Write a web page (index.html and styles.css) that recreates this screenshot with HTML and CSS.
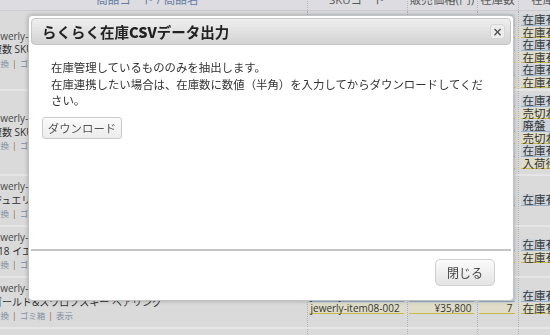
FILE: index.html
```html
<!DOCTYPE html>
<html lang="ja">

<head>
    <meta charset="utf-8">
    <title>商品一覧</title>
    <link rel="stylesheet" href="styles.css">
</head>

<body>
    <!--商品一覧テーブル (ダイアログの後ろ)-->
    <div class="page">
        <table class="items">
            <colgroup>
                <col class="c-name">
                <col class="c-sku">
                <col class="c-price">
                <col class="c-stock">
                <col class="c-status">
            </colgroup>
            <thead>
                <tr>
                    <th><a href="#">商品コード / 商品名</a></th>
                    <th>SKUコード</th>
                    <th>販売価格(円)</th>
                    <th>在庫数</th>
                    <th>在庫状態</th>
                </tr>
            </thead>
            <tbody>
                <tr class="row-a">
                    <td class="name">
                        <div class="code">jewerly-item01</div>
                        <div class="title">複数 SKU : 6</div>
                        <div class="acts"><a href="#">変換</a><i>|</i><a href="#">ゴミ箱</a><i>|</i><a href="#">表示</a></div>
                    </td>
                    <td>
                        <div class="ln">jewerly-item01-001</div>
                        <div class="ln">jewerly-item01-002</div>
                        <div class="ln">jewerly-item01-003</div>
                        <div class="ln">jewerly-item01-004</div>
                        <div class="ln">jewerly-item01-005</div>
                        <div class="ln">jewerly-item01-006</div>
                    </td>
                    <td class="num">
                        <div class="ln">¥12,800</div>
                        <div class="ln">¥12,800</div>
                        <div class="ln">¥13,800</div>
                        <div class="ln">¥13,800</div>
                        <div class="ln">¥14,800</div>
                        <div class="ln">¥14,800</div>
                    </td>
                    <td class="num">
                        <div class="ln">5</div>
                        <div class="ln">5</div>
                        <div class="ln">7</div>
                        <div class="ln">3</div>
                        <div class="ln">9</div>
                        <div class="ln">9</div>
                    </td>
                    <td>
                        <div class="ln">在庫有</div>
                        <div class="ln">在庫有</div>
                        <div class="ln">在庫有</div>
                        <div class="ln">在庫有</div>
                        <div class="ln">在庫有</div>
                        <div class="ln">在庫有</div>
                    </td>
                </tr>
                <tr class="row-b">
                    <td class="name">
                        <div class="code">jewerly-item02</div>
                        <div class="title">複数 SKU : 6</div>
                        <div class="acts"><a href="#">変換</a><i>|</i><a href="#">ゴミ箱</a><i>|</i><a href="#">表示</a></div>
                    </td>
                    <td>
                        <div class="ln">jewerly-item02-001</div>
                        <div class="ln">jewerly-item02-002</div>
                        <div class="ln">jewerly-item02-003</div>
                        <div class="ln">jewerly-item02-004</div>
                        <div class="ln">jewerly-item02-005</div>
                        <div class="ln">jewerly-item02-006</div>
                    </td>
                    <td class="num">
                        <div class="ln">¥9,800</div>
                        <div class="ln">¥9,800</div>
                        <div class="ln">¥9,800</div>
                        <div class="ln">¥10,800</div>
                        <div class="ln">¥10,800</div>
                        <div class="ln">¥10,800</div>
                    </td>
                    <td class="num">
                        <div class="ln">3</div>
                        <div class="ln">0</div>
                        <div class="ln">0</div>
                        <div class="ln">0</div>
                        <div class="ln">2</div>
                        <div class="ln">0</div>
                    </td>
                    <td>
                        <div class="ln">在庫有</div>
                        <div class="ln">売切れ</div>
                        <div class="ln">廃盤</div>
                        <div class="ln">売切れ</div>
                        <div class="ln">在庫有</div>
                        <div class="ln">入荷待</div>
                    </td>
                </tr>
                <tr>
                    <td class="name">
                        <div class="code">jewerly-item03</div>
                        <div class="title">ジュエリーボックス</div>
                        <div class="acts"><a href="#">変換</a><i>|</i><a href="#">ゴミ箱</a><i>|</i><a href="#">表示</a></div>
                    </td>
                    <td><div class="ln">jewerly-item03-001</div></td>
                    <td class="num"><div class="ln">¥4,800</div></td>
                    <td class="num"><div class="ln">5</div></td>
                    <td><div class="ln">在庫有</div></td>
                </tr>
                <tr>
                    <td class="name">
                        <div class="code">jewerly-item07</div>
                        <div class="title">K18 イエローゴールドリング</div>
                        <div class="acts"><a href="#">変換</a><i>|</i><a href="#">ゴミ箱</a><i>|</i><a href="#">表示</a></div>
                    </td>
                    <td>
                        <div class="ln">jewerly-item07-001</div>
                        <div class="ln">jewerly-item07-002</div>
                    </td>
                    <td class="num">
                        <div class="ln">¥28,000</div>
                        <div class="ln">¥28,000</div>
                    </td>
                    <td class="num">
                        <div class="ln">3</div>
                        <div class="ln">3</div>
                    </td>
                    <td>
                        <div class="ln">在庫有</div>
                        <div class="ln">在庫有</div>
                    </td>
                </tr>
                <tr>
                    <td class="name">
                        <div class="code">jewerly-item08</div>
                        <div class="title">ゴールド&amp;スワロフスキー ペアリング</div>
                        <div class="acts"><a href="#">変換</a><i>|</i><a href="#">ゴミ箱</a><i>|</i><a href="#">表示</a></div>
                    </td>
                    <td>
                        <div class="ln">jewerly-item08-001</div>
                        <div class="ln">jewerly-item08-002</div>
                    </td>
                    <td class="num">
                        <div class="ln">¥35,800</div>
                        <div class="ln">¥35,800</div>
                    </td>
                    <td class="num">
                        <div class="ln">7</div>
                        <div class="ln">7</div>
                    </td>
                    <td>
                        <div class="ln">在庫有</div>
                        <div class="ln">在庫有</div>
                    </td>
                </tr>
                <tr>
                    <td class="name">
                        <div class="code">jewerly-item09</div>
                        <div class="title">ゴールドチェーン</div>
                        <div class="acts"><a href="#">変換</a><i>|</i><a href="#">ゴミ箱</a><i>|</i><a href="#">表示</a></div>
                    </td>
                    <td><div class="ln">jewerly-item09-001</div></td>
                    <td class="num"><div class="ln">¥18,000</div></td>
                    <td class="num"><div class="ln">4</div></td>
                    <td><div class="ln">在庫有</div></td>
                </tr>
            </tbody>
        </table>
    </div>

    <!--モーダルの背景-->
    <div class="overlay"></div>

    <!--らくらく在庫CSVデータ出力 ダイアログ-->
    <section class="dialog">
        <div class="dialog-title">
            <span>らくらく在庫<b>CSV</b>データ出力</span>
            <button class="dialog-close">&#215;</button>
        </div>
        <div class="dialog-content">
            <p>在庫管理しているもののみを抽出します。<br>在庫連携したい場合は、在庫数に数値（半角）を入力してからダウンロードしてください。</p>
            <button class="btn-download">ダウンロード</button>
        </div>
        <div class="dialog-buttons">
            <button class="btn-close">閉じる</button>
        </div>
    </section>
</body>

</html>
```

FILE: styles.css
```css
body {
    margin: 0;
    overflow: hidden;
    background-color: #f3f3f3;
    font-family: "Open Sans", "Noto Sans CJK JP", sans-serif;
    color: #3a3a3a;
}

/*テーブルは少しスクロールした状態*/

.page {
    margin: -12px 0 0 -12px;
}

.items {
    width: 602px;
    border-collapse: collapse;
    table-layout: fixed;
    font-size: 10px;
}

.c-name {
    width: 319px;
}

.c-sku {
    width: 100px;
}

.c-price {
    width: 70px;
}

.c-stock {
    width: 41px;
}

.c-status {
    width: 72px;
}

.items th {
    height: 22px;
    padding: 0;
    background-color: #f6f7fb;
    border-bottom: 1px solid #e4e4e8;
    border-left: 1px dotted #d0d0d4;
    font-weight: normal;
    font-size: 11.5px;
    color: #666;
}

.items th:first-child {
    border-left: none;
}

.items th a {
    color: #6d8bb5;
    text-decoration: none;
}

.items td {
    padding: 3px 0 3px 1px;
    vertical-align: middle;
    border-bottom: 2px solid #ffffff;
    border-left: 1px dotted #c4c4c4;
}

.items td.name {
    padding: 4px;
    border-left: none;
}

.row-a td {
    padding-top: 3px;
    padding-bottom: 0;
}

.row-b td {
    padding-top: 4px;
    padding-bottom: 4px;
}

.code {
    line-height: 13.5px;
    color: #505050;
}

.title {
    line-height: 13.5px;
    color: #333;
}

.acts {
    line-height: 14px;
    font-size: 8.5px;
}

.acts a {
    color: #8fa2b8;
    text-decoration: none;
}

.acts i {
    font-style: normal;
    color: #b0703e;
    margin: 0 3px;
}

/*SKUごとの行*/

.ln {
    height: 11.5px;
    margin: 0 3px 1px 0;
    padding: 0 2px;
    line-height: 11px;
    white-space: nowrap;
    background-color: #e4ecf5;
    border-bottom: 1px solid #a9c3dd;
    box-sizing: border-box;
}

.ln:nth-child(even) {
    background-color: #f9f7de;
    border-bottom-color: #e0cf52;
}

.num .ln {
    text-align: right;
}

.items td:last-child .ln {
    margin-left: 1px;
    font-size: 11.5px;
}

.overlay {
    position: fixed;
    top: 0;
    left: 0;
    right: 0;
    bottom: 0;
    background-color: rgba(0, 0, 0, .1);
}

/*ダイアログ*/

.dialog {
    position: absolute;
    left: 28px;
    top: 15px;
    width: 486px;
    height: 286px;
    box-sizing: border-box;
    padding: 2px;
    display: flex;
    flex-direction: column;
    background-color: #fff;
    border: 1px solid #c2c2c2;
    border-radius: 4px;
    box-shadow: 0 0 4px rgba(0, 0, 0, .25);
    font-family: "Noto Sans CJK JP", sans-serif;
}

.dialog-title {
    height: 27px;
    box-sizing: border-box;
    padding: 0 5px 0 10px;
    display: flex;
    align-items: center;
    justify-content: space-between;
    background: linear-gradient(#efefef, #d3d3d3);
    border: 1px solid #c6c6c6;
    border-radius: 4px;
    font-size: 14.5px;
    font-weight: bold;
    color: #222;
}

.dialog-close {
    width: 15px;
    height: 15px;
    padding: 0;
    border: 1px solid #d6d6d6;
    border-radius: 3px;
    background-color: #ededed;
    font-family: "DejaVu Sans", sans-serif;
    font-size: 12px;
    font-weight: bold;
    line-height: 12px;
    color: #555;
}

.dialog-content {
    flex: 1;
    padding: 14px 11px 0;
    border-bottom: 2px solid #c4c4c4;
    font-size: 11.4px;
    color: #333;
}

.dialog-content p {
    margin: 0 0 8px;
    padding: 0 15px 0 9px;
    line-height: 16.5px;
}

.btn-download {
    width: 80px;
    height: 22px;
    padding: 0;
    border: 1px solid #cacaca;
    border-radius: 3px;
    background: linear-gradient(#fbfbfb, #ececec);
    font-family: "Noto Sans CJK JP", sans-serif;
    font-size: 11.4px;
    color: #555;
}

.dialog-buttons {
    height: 47px;
    display: flex;
    justify-content: flex-end;
    align-items: flex-start;
    padding: 8px 16px 0 0;
    box-sizing: border-box;
}

.btn-close {
    width: 60px;
    height: 27px;
    padding: 0;
    border: 1px solid #d0d0d0;
    border-radius: 5px;
    background: linear-gradient(#fbfbfb, #e3e3e3);
    font-family: "Noto Sans CJK JP", sans-serif;
    font-size: 12px;
    color: #444;
}
```
